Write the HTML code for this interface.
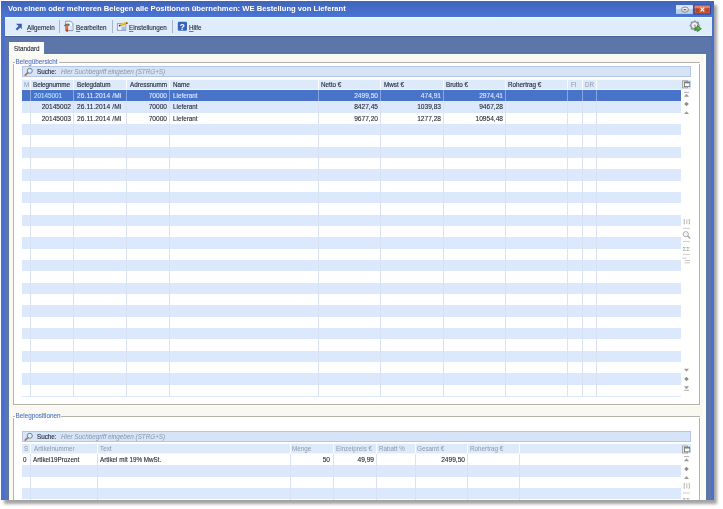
<!DOCTYPE html>
<html><head><meta charset="utf-8">
<style>
*{margin:0;padding:0;box-sizing:border-box}
html,body{width:723px;height:509px;overflow:hidden;background:#fff;font-family:"Liberation Sans",sans-serif}
.a{position:absolute}
u{text-decoration-color:#777;text-decoration-thickness:.6px;text-underline-offset:.6px}
#shadow{left:4px;top:5px;width:713px;height:499px;background:#8c8c8c;filter:blur(1.6px);opacity:.8}
#win{left:0;top:0;width:714px;height:500px;overflow:hidden;opacity:.999}
#winbg{left:1px;top:1px;width:713px;height:499px;background:#5d76aa}
#lb{left:1px;top:1px;width:4px;height:499px;background:#4a6fcc}
#rb{left:711px;top:1px;width:3px;height:499px;background:#4a6fcc}
#title{left:1px;top:1px;width:713px;height:16px;background:linear-gradient(#4064ba,#4a74d4)}
#ttext{left:8px;top:3.5px;color:#fff;font-weight:bold;font-size:7.65px;line-height:10px;white-space:nowrap}
#tb{left:5px;top:17px;width:707px;height:19px;background:linear-gradient(#e2f4fc,#deecfb 20%,#deecfb 90%,#e2ecfa);border-top:1px solid #eefbfe;border-bottom:1px solid #f2f7fd}
#tbline{left:5px;top:36px;width:707px;height:1px;background:#48609a}
.tt{font-size:6.3px;color:#1e2430;white-space:nowrap;line-height:8px;-webkit-text-stroke:.1px currentColor}
.sep{width:1px;height:13px;background:#a8b4c8}
#tab{left:9px;top:42px;width:35px;height:12px;background:#fbfbf7}
#panel{left:9px;top:54px;width:697px;height:460px;background:#f9f8f1;border-right:3px solid #fdfdfb;border-top:1px solid #fdfdfb}
.gb{border:1px solid #b3b2ab;border-top:none;background:#fff;box-shadow:1px 1px 0 #fff, inset 1px 0 0 #fff}
.gl{height:1px;background:#b3b2ab;box-shadow:0 1px 0 #fff}
.glab{color:#5072c0;font-size:6.35px;white-space:nowrap;line-height:8px;-webkit-text-stroke:.08px currentColor}
.sb{background:#d7e3f6;border:1px solid #b4c6e4}
.hdr{background:#dceafa;border-top:1px solid #f6fbff;border-bottom:1px solid #eef6fe}
.rows{background:repeating-linear-gradient(#fff 0px,#fff 11.333px,#dce9fc 11.333px,#dce9fc 22.666px)}
.vl{width:1px;background:#d8e2f4}
.cell{font-size:6.3px;color:#1e2430;white-space:nowrap;line-height:8px;-webkit-text-stroke:.1px currentColor}
.hc{font-size:6.3px;color:#2a3040;white-space:nowrap;line-height:8px;-webkit-text-stroke:.15px currentColor}
.gr{color:#8c98ac;-webkit-text-stroke:0}
.r{text-align:right;font-size:6.6px}
</style></head><body>
<div class="a" id="shadow"></div>
<div class="a" id="win">
  <div class="a" id="winbg"></div>
  <div class="a" id="lb"></div>
  <div class="a" id="rb"></div>
  <div class="a" id="title"></div>
  <div class="a" id="ttext">Von einem oder mehreren Belegen alle Positionen übernehmen: WE Bestellung von Lieferant</div>
  <div class="a" id="tb"></div>
  <div class="a" id="tbline"></div>
  <div class="a" id="tab"></div>
  <div class="a" id="panel"></div>
  <div class="a tt" style="left:27px;top:24px"><u>A</u>llgemein</div>
  <div class="a sep" style="left:59px;top:20px"></div>
  <div class="a tt" style="left:76px;top:24px"><u>B</u>earbeiten</div>
  <div class="a sep" style="left:112px;top:20px"></div>
  <div class="a tt" style="left:129px;top:24px"><u>E</u>instellungen</div>
  <div class="a sep" style="left:172px;top:20px"></div>
  <div class="a tt" style="left:189px;top:24px"><u>H</u>ilfe</div>
  <div class="a tt" style="left:14px;top:45px">Standard</div>
<div class="a gb" style="left:13px;top:62px;width:687px;height:343px"></div>
<div class="a gl" style="left:13px;top:62px;width:2px;height:1px"></div>
<div class="a gl" style="left:59px;top:62px;width:641px;height:1px"></div>
<div class="a glab" style="left:15.5px;top:58px">Belegübersicht</div>
<div class="a sb" style="left:22px;top:66px;width:669px;height:11px"></div>
<div class="a cell" style="left:37px;top:67.5px">Suche:</div>
<div class="a cell" style="left:61px;top:67.5px;color:#8a96aa;font-style:italic;-webkit-text-stroke:0">Hier Suchbegriff eingeben (STRG+S)</div>
<div class="a hdr" style="left:22px;top:79px;width:669px;height:11px"></div>
<div class="a rows" style="left:22px;top:90px;width:659px;height:307px"></div>
<div class="a " style="left:22px;top:90px;width:659px;height:11px;background:#4873c8"></div>
<div class="a vl" style="left:30px;top:90px;width:1px;height:307px"></div>
<div class="a " style="left:30px;top:79px;width:1px;height:11px;background:#f8fbff"></div>
<div class="a " style="left:30px;top:90px;width:1px;height:11px;background:#86a6e4"></div>
<div class="a vl" style="left:73px;top:90px;width:1px;height:307px"></div>
<div class="a " style="left:73px;top:79px;width:1px;height:11px;background:#f8fbff"></div>
<div class="a " style="left:73px;top:90px;width:1px;height:11px;background:#86a6e4"></div>
<div class="a vl" style="left:126px;top:90px;width:1px;height:307px"></div>
<div class="a " style="left:126px;top:79px;width:1px;height:11px;background:#f8fbff"></div>
<div class="a " style="left:126px;top:90px;width:1px;height:11px;background:#86a6e4"></div>
<div class="a vl" style="left:169px;top:90px;width:1px;height:307px"></div>
<div class="a " style="left:169px;top:79px;width:1px;height:11px;background:#f8fbff"></div>
<div class="a " style="left:169px;top:90px;width:1px;height:11px;background:#86a6e4"></div>
<div class="a vl" style="left:318px;top:90px;width:1px;height:307px"></div>
<div class="a " style="left:318px;top:79px;width:1px;height:11px;background:#f8fbff"></div>
<div class="a " style="left:318px;top:90px;width:1px;height:11px;background:#86a6e4"></div>
<div class="a vl" style="left:380px;top:90px;width:1px;height:307px"></div>
<div class="a " style="left:380px;top:79px;width:1px;height:11px;background:#f8fbff"></div>
<div class="a " style="left:380px;top:90px;width:1px;height:11px;background:#86a6e4"></div>
<div class="a vl" style="left:443px;top:90px;width:1px;height:307px"></div>
<div class="a " style="left:443px;top:79px;width:1px;height:11px;background:#f8fbff"></div>
<div class="a " style="left:443px;top:90px;width:1px;height:11px;background:#86a6e4"></div>
<div class="a vl" style="left:505px;top:90px;width:1px;height:307px"></div>
<div class="a " style="left:505px;top:79px;width:1px;height:11px;background:#f8fbff"></div>
<div class="a " style="left:505px;top:90px;width:1px;height:11px;background:#86a6e4"></div>
<div class="a vl" style="left:567px;top:90px;width:1px;height:307px"></div>
<div class="a " style="left:567px;top:79px;width:1px;height:11px;background:#f8fbff"></div>
<div class="a " style="left:567px;top:90px;width:1px;height:11px;background:#86a6e4"></div>
<div class="a vl" style="left:582px;top:90px;width:1px;height:307px"></div>
<div class="a " style="left:582px;top:79px;width:1px;height:11px;background:#f8fbff"></div>
<div class="a " style="left:582px;top:90px;width:1px;height:11px;background:#86a6e4"></div>
<div class="a vl" style="left:596px;top:90px;width:1px;height:307px"></div>
<div class="a " style="left:596px;top:79px;width:1px;height:11px;background:#f8fbff"></div>
<div class="a " style="left:596px;top:90px;width:1px;height:11px;background:#86a6e4"></div>
<div class="a hc gr" style="left:24px;top:81px">M</div>
<div class="a hc" style="left:33px;top:81px">Belegnumme</div>
<div class="a hc" style="left:77px;top:81px">Belegdatum</div>
<div class="a hc" style="left:130px;top:81px">Adressnumm</div>
<div class="a hc" style="left:173px;top:81px">Name</div>
<div class="a hc" style="left:321px;top:81px">Netto €</div>
<div class="a hc" style="left:384px;top:81px">Mwst €</div>
<div class="a hc" style="left:446px;top:81px">Brutto €</div>
<div class="a hc" style="left:508px;top:81px">Rohertrag €</div>
<div class="a hc gr" style="left:571px;top:81px">FI</div>
<div class="a hc gr" style="left:585px;top:81px">DR</div>
<div class="a cell" style="left:34px;top:92.00px;color:#b4e2ff;-webkit-text-stroke:.1px currentColor">20145001</div>
<div class="a cell" style="left:77px;top:92.00px;color:#dcecff;-webkit-text-stroke:.1px currentColor;font-size:6.6px;letter-spacing:.08px">26.11.2014 /Mi</div>
<div class="a cell r" style="left:107px;width:60px;top:92.00px;color:#dcecff;-webkit-text-stroke:.1px currentColor">70000</div>
<div class="a cell" style="left:173px;top:92.00px;color:#dcecff;-webkit-text-stroke:.1px currentColor">Lieferant</div>
<div class="a cell r" style="left:318px;width:60px;top:92.00px;color:#dcecff;-webkit-text-stroke:.1px currentColor">2499,50</div>
<div class="a cell r" style="left:381px;width:60px;top:92.00px;color:#dcecff;-webkit-text-stroke:.1px currentColor">474,91</div>
<div class="a cell r" style="left:443px;width:60px;top:92.00px;color:#dcecff;-webkit-text-stroke:.1px currentColor">2974,41</div>
<div class="a cell r" style="left:11px;width:60px;top:103.33px;">20145002</div>
<div class="a cell" style="left:77px;top:103.33px;font-size:6.6px;letter-spacing:.08px">26.11.2014 /Mi</div>
<div class="a cell r" style="left:107px;width:60px;top:103.33px;">70000</div>
<div class="a cell" style="left:173px;top:103.33px;">Lieferant</div>
<div class="a cell r" style="left:318px;width:60px;top:103.33px;">8427,45</div>
<div class="a cell r" style="left:381px;width:60px;top:103.33px;">1039,83</div>
<div class="a cell r" style="left:443px;width:60px;top:103.33px;">9467,28</div>
<div class="a cell r" style="left:11px;width:60px;top:114.67px;">20145003</div>
<div class="a cell" style="left:77px;top:114.67px;font-size:6.6px;letter-spacing:.08px">26.11.2014 /Mi</div>
<div class="a cell r" style="left:107px;width:60px;top:114.67px;">70000</div>
<div class="a cell" style="left:173px;top:114.67px;">Lieferant</div>
<div class="a cell r" style="left:318px;width:60px;top:114.67px;">9677,20</div>
<div class="a cell r" style="left:381px;width:60px;top:114.67px;">1277,28</div>
<div class="a cell r" style="left:443px;width:60px;top:114.67px;">10954,48</div>
<div class="a gb" style="left:13px;top:416px;width:687px;height:100px"></div>
<div class="a gl" style="left:13px;top:416px;width:2px;height:1px"></div>
<div class="a gl" style="left:61px;top:416px;width:639px;height:1px"></div>
<div class="a glab" style="left:15.5px;top:412px">Belegpositionen</div>
<div class="a sb" style="left:22px;top:431px;width:669px;height:11px"></div>
<div class="a cell" style="left:37px;top:432.5px">Suche:</div>
<div class="a cell" style="left:61px;top:432.5px;color:#8a96aa;font-style:italic;-webkit-text-stroke:0">Hier Suchbegriff eingeben (STRG+S)</div>
<div class="a hdr" style="left:22px;top:443px;width:669px;height:11px"></div>
<div class="a rows" style="left:22px;top:454px;width:659px;height:66px"></div>
<div class="a vl" style="left:30px;top:454px;width:1px;height:66px"></div>
<div class="a " style="left:30px;top:443px;width:1px;height:11px;background:#f8fbff"></div>
<div class="a vl" style="left:97px;top:454px;width:1px;height:66px"></div>
<div class="a " style="left:97px;top:443px;width:1px;height:11px;background:#f8fbff"></div>
<div class="a vl" style="left:290px;top:454px;width:1px;height:66px"></div>
<div class="a " style="left:290px;top:443px;width:1px;height:11px;background:#f8fbff"></div>
<div class="a vl" style="left:333px;top:454px;width:1px;height:66px"></div>
<div class="a " style="left:333px;top:443px;width:1px;height:11px;background:#f8fbff"></div>
<div class="a vl" style="left:376px;top:454px;width:1px;height:66px"></div>
<div class="a " style="left:376px;top:443px;width:1px;height:11px;background:#f8fbff"></div>
<div class="a vl" style="left:415px;top:454px;width:1px;height:66px"></div>
<div class="a " style="left:415px;top:443px;width:1px;height:11px;background:#f8fbff"></div>
<div class="a vl" style="left:467px;top:454px;width:1px;height:66px"></div>
<div class="a " style="left:467px;top:443px;width:1px;height:11px;background:#f8fbff"></div>
<div class="a vl" style="left:519px;top:454px;width:1px;height:66px"></div>
<div class="a " style="left:519px;top:443px;width:1px;height:11px;background:#f8fbff"></div>
<div class="a hc gr" style="left:24px;top:445px">S</div>
<div class="a hc gr" style="left:34px;top:445px">Artikelnummer</div>
<div class="a hc gr" style="left:100px;top:445px">Text</div>
<div class="a hc gr" style="left:292px;top:445px">Menge</div>
<div class="a hc gr" style="left:336px;top:445px">Einzelpreis €</div>
<div class="a hc gr" style="left:379px;top:445px">Rabatt %</div>
<div class="a hc gr" style="left:417px;top:445px">Gesamt €</div>
<div class="a hc gr" style="left:470px;top:445px">Rohertrag €</div>
<div class="a cell" style="left:23px;top:456.00px;">0</div>
<div class="a cell" style="left:33px;top:456.00px;">Artikel19Prozent</div>
<div class="a cell" style="left:100px;top:456.00px;">Artikel mit 19% MwSt.</div>
<div class="a cell r" style="left:270px;width:60px;top:456.00px;">50</div>
<div class="a cell r" style="left:314px;width:60px;top:456.00px;">49,99</div>
<div class="a cell r" style="left:405px;width:60px;top:456.00px;">2499,50</div>
</div>
<svg class="a" style="left:0;top:0;opacity:.999" width="723" height="509" viewBox="0 0 723 509"><g clip-path="url(#wc)"><clipPath id="wc"><rect x="0" y="0" width="714" height="500"/></clipPath><path d="M15.8 23.8 H21.8 V29.2 L20.2 27.6 L17.2 30.6 L15.6 29 L18.6 26 Z" fill="#3c5cb8"/><path d="M65.6 21.2 H70.6 L72.9 23.5 V30.6 H65.6 Z" fill="#f6f8fc" stroke="#7c8aa4" stroke-width=".9"/><path d="M69.5 26 H72.4 V30.1 H68 Z" fill="#dfe6f4"/><path d="M64 25.2 Q65.6 23.3 68.2 23.4 Q69.6 23.5 69.8 24.6 L69.2 26.1 Q67.2 25.2 64.6 26.3 Z" fill="#6a6e76"/><path d="M65.6 25.9 L68.4 25.9 L67.9 31.6 L66.4 31.6 Z" fill="#e0703c"/><path d="M66.2 29.6 L67.9 29.6 L67.8 31.6 L66.4 31.6 Z" fill="#a02818"/><rect x="117.4" y="23.6" width="8.4" height="6.8" fill="#eef2fa" stroke="#8e9cb8" stroke-width=".9"/><rect x="121.4" y="26.6" width="4" height="3.4" fill="#a8bce6"/><path d="M119.4 25.8 Q121 23.6 123.5 22.6 Q126 21.6 127.4 22.4 Q126.6 24.4 123.6 25.6 Q121.6 26.4 119.4 25.8 Z" fill="#e2b01c"/><path d="M121.5 24.4 Q124 22.6 126.2 22.6" stroke="#f8e070" stroke-width=".7" fill="none"/><circle cx="119.7" cy="25.6" r=".9" fill="#2a2a2a"/><circle cx="126.8" cy="23.2" r=".9" fill="#6a4a20"/><rect x="177.8" y="21.8" width="9.2" height="9" rx="1.2" fill="#3763b8"/><text x="182.4" y="29.6" font-size="8.4" font-weight="bold" fill="#fff" text-anchor="middle" font-family="Liberation Sans">?</text><polygon points="699.80,25.60 698.40,27.09 698.34,29.14 696.29,29.20 694.80,30.60 693.31,29.20 691.26,29.14 691.20,27.09 689.80,25.60 691.20,24.11 691.26,22.06 693.31,22.00 694.80,20.60 696.29,22.00 698.34,22.06 698.40,24.11" fill="#a4aab2" stroke="#6c747c" stroke-width=".7" stroke-linejoin="round"/><circle cx="694.5" cy="25.2" r="2.7" fill="#f0f2f4"/><circle cx="694.8" cy="25.6" r="1.1" fill="#a0a6ae"/><path d="M694.9 27.2 H697.3 V25.6 L701.4 28.7 L697.3 31.8 V30.2 H694.9 Z" fill="#46a232" stroke="#2a6e1e" stroke-width=".6" stroke-linejoin="round"/><path d="M697.6 27.0 L700 28.6 L697.6 29.2 Z" fill="#7cd050" opacity=".8"/><rect x="676" y="5.2" width="16.8" height="8.7" fill="#b6d2f2"/><rect x="676" y="5.2" width="16.8" height="3.8" fill="#d8e8fa"/><rect x="681.6" y="7.1" width="6.8" height="5" rx="2.5" fill="#dcdcdc" stroke="#7a7a7a" stroke-width=".8"/><rect x="682.6" y="8" width="4.8" height="1.6" rx=".8" fill="#f6f6f6"/><path d="M683.6 9.6 H686.2" stroke="#444" stroke-width=".9"/><rect x="694.1" y="5.1" width="16.4" height="8.9" fill="#c95a3a" stroke="#203a8c" stroke-width=".8"/><rect x="694.5" y="5.5" width="15.6" height="2.6" fill="#dc8466"/><rect x="696" y="8.6" width="3" height="3.6" fill="#b4462a"/><rect x="705.6" y="8.6" width="3" height="3.6" fill="#b4462a"/><path d="M700.6 7.6 L704.2 11.3 M704.2 7.6 L700.6 11.3" stroke="#fff" stroke-width="1.1"/><path d="M25.3 75.1 L27.6 72.8" stroke="#b87444" stroke-width="1.7" stroke-linecap="round"/><circle cx="29.8" cy="70.8" r="2.5" fill="#d8f4fc" stroke="#5a626c" stroke-width=".8"/><path d="M25.3 440.1 L27.6 437.8" stroke="#b87444" stroke-width="1.7" stroke-linecap="round"/><circle cx="29.8" cy="435.8" r="2.5" fill="#d8f4fc" stroke="#5a626c" stroke-width=".8"/><rect x="682.4" y="80.8" width="5.2" height="7" fill="#e6e6e8" stroke="#9a9a9c" stroke-width=".8"/><rect x="684.4" y="82.0" width="5.4" height="4.6" fill="#fafafa" stroke="#6e6e70" stroke-width=".8"/><rect x="684.4" y="82.0" width="5.4" height="1.3" fill="#7a7a7c"/><path d="M684 92.3 H689" stroke="#9a9a9a" stroke-width=".8"/><path d="M684 96.7 L686.5 93.7 L689 96.7 Z" fill="#9a9a9a"/><path d="M686.5 101.7 L688.8 104 L686.5 106.3 L684.2 104 Z" fill="#8e8e8e"/><path d="M684 114.0 L686.5 111.2 L689 114.0 Z" fill="#9a9a9a"/><path d="M685 219.5 H684.2 V224 H685 M686.8 219.5 V224 M688.6 219.5 H689.4 V224 H688.6" stroke="#9a9a9a" stroke-width=".7" fill="none"/><path d="M683 228.3 H690" stroke="#b8b8b8" stroke-width=".7"/><circle cx="685.8" cy="234.2" r="2.6" fill="#f6f6f6" stroke="#9c9c9c" stroke-width=".8"/><path d="M687.6 236 L690.3 238.6" stroke="#9c9c9c" stroke-width="1.2"/><path d="M683 241.4 H690" stroke="#b8b8b8" stroke-width=".7"/><text x="682.5" y="251" font-size="6" fill="#9a9a9a" font-family="Liberation Sans">ΣΣ</text><path d="M683 254.4 H690" stroke="#b8b8b8" stroke-width=".7"/><path d="M682.5 258.2 H686.5 M684.5 260.5 H690 M684.5 262.8 H690" stroke="#b0b0b0" stroke-width=".7"/><path d="M684 368.8 L686.5 371.8 L689 368.8 Z" fill="#9a9a9a"/><path d="M686.5 376.7 L688.8 379 L686.5 381.3 L684.2 379 Z" fill="#8e8e8e"/><path d="M684 386.2 L686.5 389.2 L689 386.2 Z" fill="#9a9a9a"/><path d="M684 390.3 H689" stroke="#9a9a9a" stroke-width=".8"/><rect x="682.4" y="446.0" width="5.2" height="7" fill="#e6e6e8" stroke="#9a9a9c" stroke-width=".8"/><rect x="684.4" y="447.2" width="5.4" height="4.6" fill="#fafafa" stroke="#6e6e70" stroke-width=".8"/><rect x="684.4" y="447.2" width="5.4" height="1.3" fill="#7a7a7c"/><path d="M684 456.6 H689" stroke="#9a9a9a" stroke-width=".8"/><path d="M684 461.3 L686.5 458.3 L689 461.3 Z" fill="#9a9a9a"/><path d="M686.5 466.7 L688.8 469 L686.5 471.3 L684.2 469 Z" fill="#8e8e8e"/><path d="M684 479 L686.5 476 L689 479 Z" fill="#9a9a9a"/><path d="M685 483.3 H684.2 V488.3 H685 M686.8 483.3 V488.3 M688.6 483.3 H689.4 V488.3 H688.6" stroke="#9a9a9a" stroke-width=".7" fill="none"/><path d="M683 493 H690" stroke="#b8b8b8" stroke-width=".7"/><text x="682.5" y="502" font-size="6" fill="#9a9a9a" font-family="Liberation Sans">ΣΣ</text></g></svg>
</body></html>
